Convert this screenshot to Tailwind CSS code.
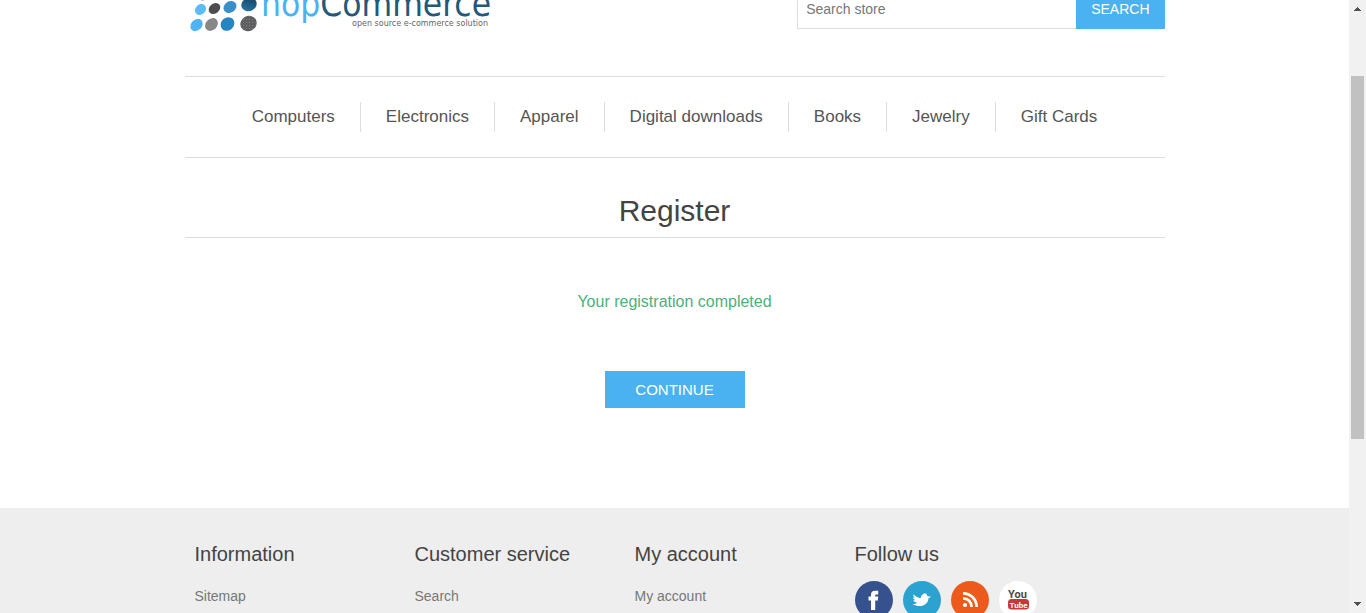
<!DOCTYPE html>
<html lang="en">
<head>
<meta charset="utf-8">
<title>nopCommerce - Register</title>
<script src="https://cdn.jsdelivr.net/npm/@tailwindcss/browser@4"></script>
</head>
<body class="flex h-screen overflow-hidden bg-white font-['Liberation_Sans',Arial,sans-serif] text-sm text-[#777]">
<div class="flex min-w-0 flex-1 flex-col overflow-hidden">
  <div class="mx-auto w-full max-w-[980px] shrink-0">
    <header class="flex h-19 items-end justify-between overflow-hidden">
      <a href="#" aria-label="nopCommerce" class="self-start">
        <svg width="320" height="40" viewBox="0 0 320 40">
          <defs>
            <pattern id="dots" width="3" height="3" patternUnits="userSpaceOnUse"><circle cx="1.5" cy="1.5" r=".6" fill="#fff" fill-opacity=".25"/></pattern>
            <linearGradient id="navy" x1="0" y1="1" x2="1" y2="0"><stop offset="0" stop-color="#2b7cab"/><stop offset="1" stop-color="#123f5e"/></linearGradient>
          </defs>
          <ellipse cx="17.500" cy="-4.500" rx="5" ry="5" fill="#777"/>
          <ellipse cx="15.500" cy="9.500" rx="6" ry="5" transform="rotate(-45 15.500 9.500)" fill="#5bbcf6"/>
          <ellipse cx="29.500" cy="8.500" rx="6.300" ry="5" transform="rotate(-40 29.500 8.500)" fill="#4d4d4f"/>
          <ellipse cx="45" cy="7" rx="6.800" ry="5.600" transform="rotate(-35 45 7)" fill="#3a8fc8"/>
          <ellipse cx="64" cy="4.500" rx="7.800" ry="6.600" transform="rotate(-20 64 4.500)" fill="url(#navy)"/>
          <ellipse cx="11.500" cy="25" rx="6.800" ry="5.400" transform="rotate(-45 11.500 25)" fill="#4ab2f1"/>
          <ellipse cx="26.500" cy="24.500" rx="7" ry="5.700" transform="rotate(-45 26.500 24.500)" fill="#878787"/>
          <ellipse cx="42.500" cy="24" rx="7.300" ry="6.400" transform="rotate(-45 42.500 24)" fill="#2585c0"/>
          <ellipse cx="63.500" cy="23.500" rx="8.300" ry="7.600" transform="rotate(-30 63.500 23.500)" fill="#5e5e60"/>
          <ellipse cx="11.500" cy="25" rx="6.800" ry="5.400" transform="rotate(-45 11.500 25)" fill="url(#dots)"/>
          <circle cx="63.500" cy="23.500" r="7.500" fill="url(#dots)"/>
          <text x="76" y="16" font-family="DejaVu Sans Condensed, Noto Sans, sans-serif" font-size="35" fill="#4ab2f1">nop<tspan fill="#235878">Commerce</tspan></text>
          <text x="303" y="26" text-anchor="end" font-family="DejaVu Sans, sans-serif" font-size="8" fill="#666">open source e-commerce solution</text>
        </svg>
      </a>
      <form class="mb-[47px] flex h-10" onsubmit="return false">
        <input type="search" aria-label="Search store" placeholder="Search store" class="w-[279px] border border-r-0 border-[#ddd] px-2 text-sm outline-none placeholder:text-[#777]">
        <button type="submit" class="bg-[#4ab2f1] px-[15px] text-sm text-white">SEARCH</button>
      </form>
    </header>

    <nav aria-label="Categories" class="border-y border-[#ddd] py-[25px]">
      <ul class="flex justify-center divide-x divide-[#ddd] text-[17px] leading-[30px] text-[#555]">
        <li class="px-[25px]"><a href="#">Computers</a></li>
        <li class="px-[25px]"><a href="#">Electronics</a></li>
        <li class="px-[25px]"><a href="#">Apparel</a></li>
        <li class="px-[25px]"><a href="#">Digital downloads</a></li>
        <li class="px-[25px]"><a href="#">Books</a></li>
        <li class="px-[25px]"><a href="#">Jewelry</a></li>
        <li class="px-[25px]"><a href="#">Gift Cards</a></li>
      </ul>
    </nav>

    <main class="pb-[100px] text-center">
      <h1 class="border-b border-[#ddd] pt-7 pb-px text-[30px] leading-[50px] text-[#444]">Register</h1>
      <p class="mt-[54px] text-base leading-5 text-[#4cb17c]">Your registration completed</p>
      <button type="button" class="mt-[59px] h-[37px] min-w-[140px] bg-[#4ab2f1] px-[30px] text-[15px] leading-[37px] text-white align-top">CONTINUE</button>
    </main>
  </div>

  <footer class="flex-1 bg-[#eee]">
    <div class="mx-auto grid w-full max-w-[980px] grid-cols-[220px_220px_220px_1fr] px-[10px] pt-[34px]">
      <section>
        <h2 class="text-xl leading-6 text-[#444]">Information</h2>
        <a href="#" class="mt-5 block leading-5">Sitemap</a>
      </section>
      <section>
        <h2 class="text-xl leading-6 text-[#444]">Customer service</h2>
        <a href="#" class="mt-5 block leading-5">Search</a>
      </section>
      <section>
        <h2 class="text-xl leading-6 text-[#444]">My account</h2>
        <a href="#" class="mt-5 block leading-5">My account</a>
      </section>
      <section>
        <h2 class="text-xl leading-6 text-[#444]">Follow us</h2>
        <div class="mt-[15px] flex gap-[10px]">
          <a href="#" aria-label="Facebook"><svg width="38" height="38" viewBox="0 0 38 38"><circle cx="19" cy="19" r="19" fill="#35528f"/><path fill="#fff" d="M16 29V19.500h-2.500v-4H16v-1.800c0-2.600 1.400-4 4-4h3.200v3.800h-1.800c-.9 0-1.200.4-1.200 1.200v.8h3l-.4 4h-2.600V29z"/></svg></a>
          <a href="#" aria-label="Twitter"><svg width="38" height="38" viewBox="0 0 38 38"><circle cx="19" cy="19" r="19" fill="#2ba2cf"/><path fill="#fff" d="M10.300 13.200c2.300 2.400 4.900 3.600 7.400 3.800.3-2.600 2-4.500 4.900-5.100l-.6 1.200 2.100-.6-.8 1.200c.6.300 1 .8 1.300 1.500l3.600.6-2.700 1.400c-.3 4.600-3.800 7.800-8.800 7.800-2.700 0-5-.7-7-2.100 1.900.1 3.500-.3 4.700-1.200-1.900-.2-3.200-1-4.100-2.500l1.800-.1c-1.200-.6-1.900-1.400-2-2.600l1.700.3c-1.100-1-1.600-2.200-1.500-3.600z"/></svg></a>
          <a href="#" aria-label="RSS"><svg width="38" height="38" viewBox="0 0 38 38"><circle cx="19" cy="19" r="19" fill="#ec5b1b"/><circle cx="14" cy="24" r="2.100" fill="#fff"/><path d="M12 17.300a8.500 8.500 0 0 1 8.600 8.700M12 12.300A13.500 13.500 0 0 1 25.600 26" fill="none" stroke="#fff" stroke-width="2.700"/></svg></a>
          <a href="#" aria-label="YouTube"><svg width="38" height="38" viewBox="0 0 38 38"><circle cx="19" cy="19" r="19" fill="#fff"/><text x="18.500" y="17" text-anchor="middle" font-family="Roboto, sans-serif" font-weight="700" font-size="11" fill="#4a4a4a">You</text><rect x="9" y="18" width="21" height="10.500" rx="3.500" fill="#c8373a"/><text x="19.500" y="26.500" text-anchor="middle" font-family="Roboto, sans-serif" font-weight="700" font-size="8" fill="#fff">Tube</text></svg></a>
        </div>
      </section>
    </div>
  </footer>
</div>

<div aria-hidden="true" class="flex w-[17px] shrink-0 flex-col items-center justify-between bg-[#f1f1f1] py-[6px]">
  <svg width="7" height="5" viewBox="0 0 7 5" shape-rendering="crispEdges"><path fill="#505050" d="M3 1h1v1h1v1h1v1h1v1H0V4h1V3h1V2h1z"/></svg>
  <div class="mt-[65px] mb-auto h-[363px] w-[13px] bg-[#c1c1c1]"></div>
  <svg width="7" height="5" viewBox="0 0 7 5" shape-rendering="crispEdges"><path fill="#505050" d="M0 0h7v1H6v1H5v1H4v1H3V3H2V2H1V1H0z"/></svg>
</div>
</body>
</html>
